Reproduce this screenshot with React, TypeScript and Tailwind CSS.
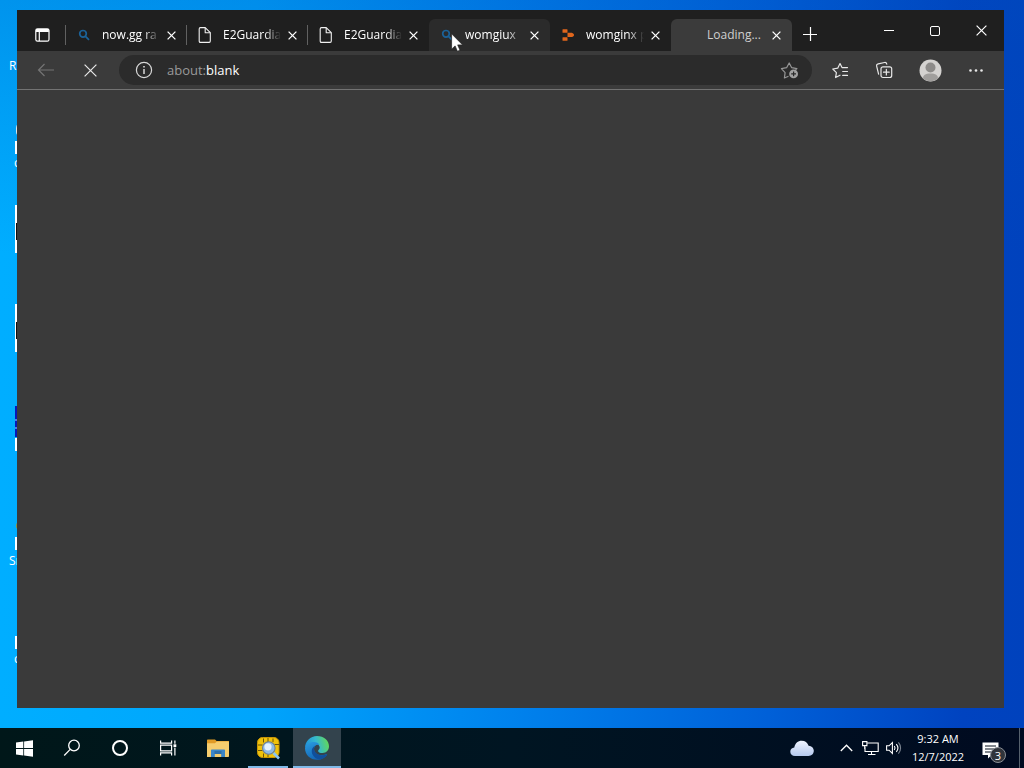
import { useState } from 'react';
import type { ReactNode } from 'react';

type Favicon = 'search' | 'page' | 'blocks' | 'none';

interface Tab { id: number; title: string; icon: Favicon; }

const TABS: Tab[] = [
  { id: 1, title: 'now.gg ra', icon: 'search' },
  { id: 2, title: 'E2Guardian', icon: 'page' },
  { id: 3, title: 'E2Guardian', icon: 'page' },
  { id: 4, title: 'womgiux', icon: 'search' },
  { id: 5, title: 'womginx pr', icon: 'blocks' },
  { id: 6, title: 'Loading...', icon: 'none' },
];
const HOVERED_ID = 4;

function TabIcon({ icon }: { icon: Favicon }) {
  if (icon === 'search') {
    return (
      <svg width="16" height="16" viewBox="0 0 16 16" fill="none" stroke="#1b6299" strokeWidth="1.7">
        <circle cx="7" cy="6.8" r="3.3" /><path d="M9.5 9.3 13 12.8" />
      </svg>
    );
  }
  if (icon === 'page') {
    return (
      <svg width="16" height="18" viewBox="0 0 16 18" fill="none" stroke="#f0f0f0" strokeWidth="1.1" strokeLinejoin="round">
        <path d="M3.4 1.6h4.800l5.100 5v8.500c0 .8-.4 1.300-1.200 1.300H3.400c-.8 0-1.200-.5-1.200-1.300V2.900c0-.8.4-1.300 1.200-1.300Z" /><path d="M8.200 1.800v4.900h4.900" />
      </svg>
    );
  }
  if (icon === 'blocks') {
    return (
      <svg width="16" height="16" viewBox="0 0 16 16" fill="#e0661c">
        <rect x="2.500" y="2.200" width="5" height="3.600" rx=".6" /><path d="M7.500 5.800h4.300c1.400.5 2.200 1.200 2.200 2.100s-.8 1.700-2.200 2.200H7.500Z" /><rect x="2.500" y="10.200" width="5" height="3.600" rx=".6" />
      </svg>
    );
  }
  return <span className="block size-4" />;
}

function Cross({ size, width = 1.2 }: { size: number; width?: number }) {
  return (
    <svg width={size} height={size} viewBox={`0 0 ${size} ${size}`} fill="none" stroke="currentColor" strokeWidth={width}>
      <path d={`M.6.6 ${size - 0.6} ${size - 0.6}M${size - 0.6} .6.6 ${size - 0.6}`} />
    </svg>
  );
}

function Cursor() {
  return (
    <svg className="pointer-events-none absolute left-[22px] top-[14px] z-10" width="13" height="20" viewBox="0 0 13 20">
      <path d="M.6.8v15.400l3.500-3.300 2.300 5.400 2.600-1.100-2.300-5.300h4.900Z" fill="#fff" stroke="#222" strokeWidth=".7" />
    </svg>
  );
}

function TabItem({ tab, active, onSelect }: { tab: Tab; active: boolean; onSelect: () => void }) {
  const hovered = tab.id === HOVERED_ID;
  const tone = active ? 'rounded-t-md bg-[#3b3b3b] text-[#cfcfcf]' : hovered ? 'rounded-t-md bg-[#2b2b2b] text-white' : 'text-white';
  const divider = tab.id < HOVERED_ID ? 'before:absolute before:-left-px before:top-[6px] before:h-[20px] before:w-px before:bg-[#616161]' : '';
  return (
    <div className={`relative flex h-8 w-[121px] items-center pl-[10px] pr-2 ${tone} ${divider}`}>
      <button onClick={onSelect} className="flex min-w-0 flex-1 items-center gap-[10px]">
        <span className="shrink-0"><TabIcon icon={tab.icon} /></span>
        <span className={`flex-1 overflow-hidden whitespace-nowrap text-left text-[12px] leading-4 ${active ? '' : '[mask-image:linear-gradient(to_right,black_72%,transparent)]'}`}>{tab.title}</span>
      </button>
      <button aria-label="Close tab" className="ml-[3px] flex size-4 shrink-0 items-center justify-center text-white"><Cross size={9} width={1.3} /></button>
      {hovered && <Cursor />}
    </div>
  );
}

function TitleBar() {
  const [active, setActive] = useState(6);
  return (
    <header className="flex h-[41px] items-end bg-[#1f1f1f] text-white">
      <button aria-label="Tab actions" className="mr-[6px] flex h-8 w-[43px] items-center justify-end pr-[10px]">
        <svg width="15" height="14" viewBox="0 0 15 14" fill="none" stroke="currentColor" strokeWidth="1.200">
          <rect x=".8" y=".8" width="13.200" height="12.400" rx="1.800" /><path d="M4.300 3.500v9.500" /><path d="M1 2.500h12.800" strokeWidth="3" />
        </svg>
      </button>
      <nav className="flex">
        {TABS.map((t) => <TabItem key={t.id} tab={t} active={t.id === active} onSelect={() => setActive(t.id)} />)}
      </nav>
      <button aria-label="New tab" className="flex h-[34px] w-[35px] items-center justify-center">
        <svg width="14" height="14" viewBox="0 0 14 14" stroke="currentColor" strokeWidth="1.200"><path d="M7.500 0v14M0 7.500h14" /></svg>
      </button>
      <div className="ml-auto flex h-full">
        <button aria-label="Minimize" className="flex w-[46px] items-center justify-center"><span className="h-px w-[10px] bg-white" /></button>
        <button aria-label="Maximize" className="flex w-[46px] items-center justify-center"><span className="size-[10px] rounded-[2px] border border-white" /></button>
        <button aria-label="Close" className="flex w-[46px] items-center justify-center"><Cross size={11} /></button>
      </div>
    </header>
  );
}

function ToolButton({ label, children }: { label: string; children: ReactNode }) {
  return <button aria-label={label} className="flex h-8 w-11 shrink-0 items-center justify-center text-[#e8e8e8]">{children}</button>;
}

function Toolbar() {
  return (
    <div className="flex h-[39px] items-center border-b border-[#737373] bg-[#3b3b3b] pl-[7px] pr-[6px]">
      <ToolButton label="Back">
        <svg width="18" height="14" viewBox="0 0 18 14" fill="none" stroke="#747474" strokeWidth="1.200"><path d="M17 7H1.500M7.500 1l-6 6 6 6" /></svg>
      </ToolButton>
      <ToolButton label="Stop"><Cross size={13} /></ToolButton>
      <div className="ml-[7px] mr-[6px] flex h-[30px] min-w-0 flex-1 items-center rounded-full bg-[#2b2b2b] pl-4 pr-3 text-[13px] leading-5">
        <svg className="mr-[14px] shrink-0" width="18" height="18" viewBox="0 0 18 18" fill="none" stroke="#d8d8d8">
          <circle cx="9" cy="9" r="7.600" strokeWidth="1.200" /><path d="M9 8v5" strokeWidth="1.500" /><path d="M9 5v1.500" strokeWidth="1.600" />
        </svg>
        <label htmlFor="address" className="text-[#9a9a9a]">about:</label>
        <input id="address" aria-label="Address" defaultValue="blank" className="min-w-0 flex-1 bg-transparent text-white outline-none" />
        <button aria-label="Add to favorites">
          <svg width="20" height="20" viewBox="0 0 20 20" fill="none" stroke="#969696" strokeWidth="1.200" strokeLinejoin="round">
            <path d="M8.500 16.300 4.400 18l.7-5.400-3.700-3.900 5.200-1L9.200 3l2.500 4.700 5.200 1-1.700 1.700" />
            <circle cx="13.600" cy="13.900" r="4.400" fill="#a2a2a2" stroke="none" /><path d="M13.600 11.500v4.800M11.200 13.900H16" stroke="#2b2b2b" />
          </svg>
        </button>
      </div>
      <ToolButton label="Favorites">
        <svg width="18" height="18" viewBox="0 0 18 18" fill="none" stroke="currentColor" strokeWidth="1.200" strokeLinejoin="round" strokeLinecap="round">
          <path d="M9 14.200 4.600 16.500l.8-4.900L1.800 8l4.900-.8L9 2.600l2 4h5.500M11.700 10.500h4.800M11.700 14.400h4.800" />
        </svg>
      </ToolButton>
      <ToolButton label="Collections">
        <svg width="18" height="18" viewBox="0 0 18 18" fill="none" stroke="currentColor" strokeWidth="1.200" strokeLinecap="round">
          <rect x="6" y="5.800" width="10.700" height="10.700" rx="2" /><path d="M11.350 8.300v5.700M8.500 11.150h5.700" /><path d="M3.600 13.200 1.700 5.300c-.3-1.300.2-2.200 1.500-2.500l6.300-1.300c1.200-.2 2 .4 2.300 1.600" />
        </svg>
      </ToolButton>
      <span className="ml-0.5 flex">
        <ToolButton label="Profile">
          <svg width="23" height="23" viewBox="0 0 23 23">
            <circle cx="11.500" cy="11.500" r="11" fill="#d4d2d0" /><circle cx="11.500" cy="8.500" r="5" fill="#8d8b89" />
            <path d="M4 19.600c0-3.400 2.400-5 7.500-5s7.500 1.600 7.500 5c-4 3.700-11 3.700-15 0Z" fill="#a09e9c" />
          </svg>
        </ToolButton>
      </span>
      <span className="ml-0.5 flex">
        <ToolButton label="Settings and more">
          <svg width="14" height="3" viewBox="0 0 14 3" fill="currentColor"><circle cx="1.500" cy="1.500" r="1.300" /><circle cx="7" cy="1.500" r="1.300" /><circle cx="12.500" cy="1.500" r="1.300" /></svg>
        </ToolButton>
      </span>
    </div>
  );
}

// Desktop shortcuts, mostly covered by the browser window
function Shortcuts() {
  return (
    <div className="absolute inset-y-0 left-0 w-[18px] overflow-hidden whitespace-nowrap text-[12px] leading-4 text-white">
      <span className="absolute left-[9px] top-[58px]">R</span>
      <span className="absolute left-4 top-[124px] h-3 w-1 rounded-l bg-[#d9e5ea]" />
      <span className="absolute left-[15px] top-[141px] h-[13px] w-1 bg-white" />
      <span className="absolute left-[14px] top-[155px]">c</span>
      <span className="absolute left-[15px] top-[205px] h-12 w-1 bg-white" />
      <span className="absolute left-4 top-[223px] h-[17px] w-1 bg-[#101010]" />
      <span className="absolute left-[15px] top-[304px] h-12 w-1 bg-white" />
      <span className="absolute left-4 top-[322px] h-[17px] w-1 bg-[#101010]" />
      <span className="absolute left-[15px] top-[406px] h-[31px] w-1 bg-[#0618b8]" />
      <span className="absolute left-[15px] top-[419px] h-[2px] w-1 bg-[#4d7ae6]" />
      <span className="absolute left-[15px] top-[427px] h-[2px] w-1 bg-[#4d7ae6]" />
      <span className="absolute left-[15px] top-[438px] h-[13px] w-1 bg-white" />
      <span className="absolute left-4 top-[522px] h-2 w-1 rounded-l bg-[#9b8f28]" />
      <span className="absolute left-[15px] top-[537px] h-[13px] w-1 bg-white" />
      <span className="absolute left-[9px] top-[553px]">Sn</span>
      <span className="absolute left-[15px] top-[636px] h-[13px] w-1 bg-white" />
      <span className="absolute left-[14px] top-[651px]">c</span>
    </div>
  );
}

function TaskButton({ label, className = '', children }: { label: string; className?: string; children: ReactNode }) {
  return <button aria-label={label} className={`relative flex h-10 w-12 items-center justify-center ${className}`}>{children}</button>;
}

function EdgeLogo() {
  return (
    <svg width="26" height="26" viewBox="0 0 26 26">
      <defs>
        <linearGradient id="edgeTop" x1="0" y1=".6" x2="1" y2=".4"><stop offset="0" stopColor="#1f8fd8" /><stop offset=".5" stopColor="#35b8cf" /><stop offset="1" stopColor="#63d957" /></linearGradient>
        <linearGradient id="edgeLeft" x1="0" y1="0" x2=".5" y2="1"><stop offset="0" stopColor="#2a9de0" /><stop offset="1" stopColor="#1264b4" /></linearGradient>
      </defs>
      <path d="M1 13C1 6 6.500 1 13 1c7 0 12 4.800 12 10.300 0 4-2.800 6.700-6.400 6.700-2.900 0-4.500-1-4.500-2.100 0-.9 1.600-1.500 1.600-3.400 0-2-1.600-3.600-4-3.600C7 8.900 2.200 9.600 1 13Z" fill="url(#edgeTop)" />
      <path d="M1 13c1.200-3.800 4.500-6 8.700-6 2.900 0 5 .9 5.800 3-2.700-1.100-5.500.8-5.500 3.700 0 4.800 4.800 7.500 10.500 6 1.200-.3 2.100-.6 2.700-.2-2 3.200-5.800 5.300-10.200 5.300C6.200 24.800 1 19.800 1 13Z" fill="url(#edgeLeft)" />
      <path d="M11.400 10.600c-2.600 1.300-4.100 3.700-3.600 6.700.8 4 4.200 7 8 7.300 3.100-.6 5.500-2.200 7.200-4.600.2-.5-.2-.8-.8-.5-5.500 2.200-12.200-.9-12.200-5.800 0-1.200.5-2.300 1.400-3.100Z" fill="#104f9b" />
    </svg>
  );
}

function Taskbar() {
  return (
    <footer className="flex h-10 shrink-0 bg-linear-to-r from-[#001719] via-[#001522] to-[#000a20] text-white">
      <TaskButton label="Start">
        <svg width="17" height="17" viewBox="0 0 17 17" fill="#fff"><path d="M0 2.500 7.300 1.500v6.600H0ZM8.100 1.400 17 .2v7.900H8.100ZM0 8.900h7.300v6.600L0 14.500ZM8.100 8.900H17v7.900l-8.900-1.200Z" /></svg>
      </TaskButton>
      <TaskButton label="Search">
        <svg width="18" height="18" viewBox="0 0 18 18" fill="none" stroke="#fff" strokeWidth="1.300"><circle cx="11" cy="6.500" r="5.300" /><path d="M7.200 10.400 1.200 16.500" /></svg>
      </TaskButton>
      <TaskButton label="Cortana"><span className="size-4 rounded-full border-2 border-white" /></TaskButton>
      <TaskButton label="Task View">
        <svg width="17" height="16" viewBox="0 0 17 16" fill="none" stroke="#fff" strokeWidth="1.200">
          <path d="M.6.500v2.600h11V.5M.6 15.500v-2.600h11v2.600M.6 5.100h11v5.800H.6ZM14.900.5v3.300M14.900 7.800v7.700" /><path d="M13.500 4.300h2.800v2.800h-2.800Z" fill="#fff" stroke="none" />
        </svg>
      </TaskButton>
      <TaskButton label="File Explorer" className="ml-0.5">
        <svg width="22" height="19" viewBox="0 0 22 19">
          <path d="M0 1.500C0 .9.400.5 1 .5h7l1.600 1.500H22v4H0Z" fill="#e09b26" /><path d="M0 4.200h8l1.800-1.600H21c.6 0 1 .4 1 1V17c0 .6-.4 1-1 1H0Z" fill="#f5cd6e" />
          <path d="M4 18v-6.500c0-.6.400-1 1-1h12c.6 0 1 .4 1 1V18h-3.800v-3H7.800v3Z" fill="#3b86c8" /><path d="M7.500 12h7v3h-7Z" fill="#2f6fa8" />
        </svg>
      </TaskButton>
      <TaskButton label="Remote viewer" className="ml-0.5 after:absolute after:bottom-0 after:h-0.5 after:w-10 after:bg-[#80b9e8]">
        <svg width="25" height="24" viewBox="0 0 25 24" fill="none">
          <rect x="1.500" y="1.500" width="21.500" height="20" rx="5" fill="#f0c20c" stroke="#c99606" />
          <path d="M12 2v4M12 17v4M2 9h4.500M2 14.500h4.500M18.500 8.500H23M7.500 2.500v4M17 2.500v3.500M7.500 17.500v4" stroke="#5f4a08" strokeWidth=".9" />
          <circle cx="12.800" cy="12" r="6.300" fill="#8fbbe6" stroke="#6e7f90" strokeWidth="1.100" /><circle cx="12" cy="10.800" r="3.600" fill="#e4f2ff" />
          <path d="m17.500 17 5.500 5.500" stroke="#8ac5f5" strokeWidth="2.600" />
        </svg>
      </TaskButton>
      <TaskButton label="Microsoft Edge" className="ml-px bg-[#33434d] after:absolute after:bottom-0 after:h-0.5 after:w-12 after:bg-[#80b9e8]"><EdgeLogo /></TaskButton>
      <div className="ml-auto flex items-center">
        <button aria-label="Weather" className="mr-[26px]">
          <svg width="24" height="17" viewBox="0 0 24 17">
            <defs><linearGradient id="cloud" x1="0" y1="0" x2="0" y2="1"><stop offset="0" stopColor="#eff4ff" /><stop offset="1" stopColor="#b5c9ee" /></linearGradient></defs>
            <path d="M5 16C2.200 16 .3 14.200.3 11.800c0-2.300 1.700-4 4-4.200C5 3.500 7.900.8 11.700.8c3.300 0 5.900 2 6.900 4.900 3 .1 5.200 2.300 5.200 5.100 0 3-2.200 5.200-5.300 5.200Z" fill="url(#cloud)" />
          </svg>
        </button>
        <button aria-label="Show hidden icons" className="mr-[9px]">
          <svg width="13" height="8" viewBox="0 0 13 8" fill="none" stroke="#fff" strokeWidth="1.300"><path d="M.8 7 6.500 1.200 12.200 7" /></svg>
        </button>
        <button aria-label="Network" className="mr-[7px]">
          <svg width="17" height="15" viewBox="0 0 17 15" fill="none" stroke="#fff" strokeWidth="1.100"><path d="M5.500 2h10.700v8.500H3V6M9.500 10.500v3M6 13.500h7.500M.6.600h4.300v4H.6ZM2.700 4.600V8" /></svg>
        </button>
        <button aria-label="Volume" className="mr-[10px]">
          <svg width="16" height="14" viewBox="0 0 16 14" fill="none" stroke="#fff" strokeWidth="1.100">
            <path d="M.6 4.800h2.500L6.400 1.600v10.800L3.100 9.200H.6ZM8.300 5c.9 1.200.9 2.800 0 4M10.300 3.200c1.900 2.200 1.900 5.400 0 7.600" /><path d="M12.400 1.400c2.900 3.300 2.900 7.900 0 11.200" stroke="#7b8490" />
          </svg>
        </button>
        <time className="flex w-[52px] flex-col items-center text-[11px] leading-[18px]"><span className="whitespace-nowrap">9:32 AM</span><span>12/7/2022</span></time>
        <button aria-label="Notifications" className="relative ml-[18px] mr-5 h-6 w-[17px]">
          <svg width="17" height="17" viewBox="0 0 17 17" className="mt-1"><path d="M.5.500h16v12.500h-7L6 16.500V13H.5Z" fill="#fff" /><path d="M3 4h11M3 7h11M3 10h7" stroke="#06101f" strokeWidth="1.100" /></svg>
          <span className="absolute left-2 top-[11px] flex size-4 items-center justify-center rounded-full border border-[#8a8f96] bg-[#30343b] text-[11px] leading-none">3</span>
        </button>
        <button aria-label="Show desktop" className="h-10 w-[5px] border-l border-[#56616d]" />
      </div>
    </footer>
  );
}

export default function App() {
  return (
    <div className="flex min-h-screen flex-col bg-[linear-gradient(90deg,#00aeff_0%,#00a5fc_25%,#0082ed_50%,#0060d8_75%,#0043c0_94%,#0042bd_100%)] font-['Open_Sans','Noto_Sans',sans-serif]">
      <div className="relative flex flex-1 flex-col bg-[linear-gradient(180deg,rgba(0,80,190,0.28)_0%,transparent_35%)] pb-5 pl-[17px] pr-5 pt-[10px]">
        <Shortcuts />
        <section className="relative flex flex-1 flex-col bg-[#3a3a3a]">
          <TitleBar />
          <Toolbar />
          <main className="flex-1" />
        </section>
      </div>
      <Taskbar />
    </div>
  );
}
